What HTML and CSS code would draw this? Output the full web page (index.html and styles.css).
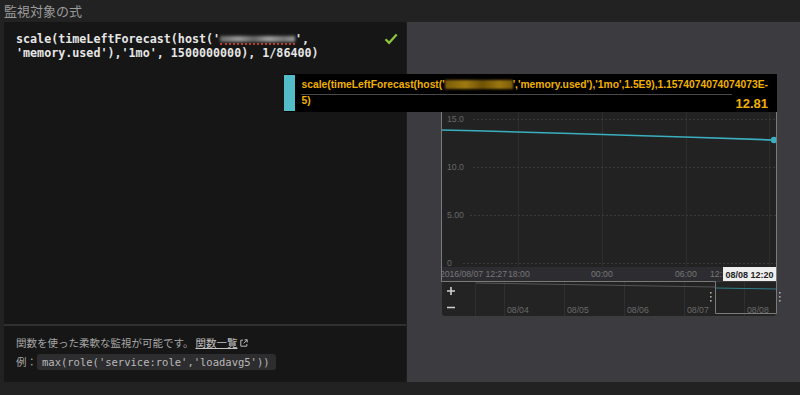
FILE: index.html
```html
<!DOCTYPE html>
<html lang="ja">
<head>
    <meta charset="UTF-8">
    <meta name="viewport" content="width=device-width, initial-scale=1.0">
    <title>監視対象の式</title>
    <link rel="stylesheet" href="styles.css">
</head>
<body>
    <h2 class="title">監視対象の式</h2>
    <div class="main">
        <div class="editor-pane">
            <div class="editor">
                <pre class="expr">scale(timeLeftForecast(host('<span class="masked"></span>',
'memory.used'),'1mo', 1500000000), 1/86400)</pre>
                <svg class="check" width="14" height="12" viewBox="0 0 14 12">
                    <path d="M1.5 6.2l3.6 3.6 7.6-8.4" stroke="#8cc63e" stroke-width="2.2" fill="none"/>
                </svg>
            </div>
            <div class="help">
                <p>関数を使った柔軟な監視が可能です。<a class="doc-link" href="#">関数一覧</a><svg class="ext" width="8" height="8" viewBox="0 0 8 8"><path d="M3 1.2H0.8v6h6V5" stroke="#bbb" fill="none"/><path d="M4.5 0.8h2.7v2.7M7.2 0.8L3.6 4.4" stroke="#bbb" fill="none"/></svg></p>
                <p>例：<code>max(role('service:role','loadavg5'))</code></p>
            </div>
        </div>

        <div class="preview">
            <svg class="chart" width="340" height="213" viewBox="441 105 340 213">
                <!-- plot -->
                <rect x="441" y="105" width="335" height="176" fill="#222"/>
                <rect x="441" y="267" width="335" height="14" fill="#2d2d31"/>
                <g stroke="#2e2e2e">
                    <line x1="518.5" y1="105" x2="518.5" y2="267"/>
                    <line x1="602.5" y1="105" x2="602.5" y2="267"/>
                    <line x1="686.5" y1="105" x2="686.5" y2="267"/>
                    <line x1="769.5" y1="105" x2="769.5" y2="267"/>
                </g>
                <g stroke="#3a3a3a" stroke-dasharray="2 2">
                    <line x1="473" y1="119.5" x2="776" y2="119.5"/>
                    <line x1="473" y1="167.5" x2="776" y2="167.5"/>
                    <line x1="470" y1="215.5" x2="776" y2="215.5"/>
                    <line x1="463" y1="263.5" x2="776" y2="263.5"/>
                </g>
                <g class="axis" fill="#676767">
                    <text x="447" y="122">15.0</text>
                    <text x="447" y="170">10.0</text>
                    <text x="447" y="218">5.00</text>
                    <text x="447" y="266">0</text>
                </g>
                <path d="M441 130 Q602 134 774 140" stroke="#3aafc0" stroke-width="1.6" fill="none"/>
                <circle cx="774" cy="140" r="3.2" fill="#3aafc0"/>
                <g class="axis" fill="#777">
                    <text x="440" y="276.5" textLength="67">2016/08/07 12:27</text>
                    <text x="508" y="276.5">18:00</text>
                    <text x="591" y="276.5">00:00</text>
                    <text x="675" y="276.5">06:00</text>
                    <text x="710" y="276.5">12:</text>
                </g>
                <rect x="723" y="267" width="53" height="14" fill="#eee"/>
                <text class="axis-current" x="749.5" y="277.5" text-anchor="middle">08/08 12:20</text>

                <!-- navigator -->
                <path d="M442 282H776V313Q776 316 773 316H445Q442 316 442 313Z" fill="#232323"/>
                <g stroke="#2f2f2f">
                    <line x1="475.5" y1="282" x2="475.5" y2="316"/>
                    <line x1="504.5" y1="282" x2="504.5" y2="316"/>
                    <line x1="564.5" y1="282" x2="564.5" y2="316"/>
                    <line x1="624.5" y1="282" x2="624.5" y2="316"/>
                    <line x1="684.5" y1="282" x2="684.5" y2="316"/>
                    <line x1="744.5" y1="282" x2="744.5" y2="316"/>
                </g>
                <path d="M447 291H455M451 287V295M447 307.5H455" stroke="#d0d0d0" stroke-width="1.6"/>
                <path d="M476 283L715 287" stroke="#555" fill="none"/>
                <path d="M715 288L776 289" stroke="#2f7f8a" fill="none"/>
                <g class="axis" fill="#6a6a6a">
                    <text x="507" y="313">08/04</text>
                    <text x="567" y="313">08/05</text>
                    <text x="627" y="313">08/06</text>
                    <text x="687" y="313">08/07</text>
                    <text x="747" y="313">08/08</text>
                </g>
                <path d="M441.5 105V281.5H715.5V313.5H776.5V105" stroke="#7a7a7a" fill="none"/>
                <g fill="#aaa">
                    <rect x="710" y="292" width="1.6" height="1.6"/>
                    <rect x="710" y="296" width="1.6" height="1.6"/>
                    <rect x="710" y="300" width="1.6" height="1.6"/>
                    <rect x="779" y="292" width="1.6" height="1.6"/>
                    <rect x="779" y="296" width="1.6" height="1.6"/>
                    <rect x="779" y="300" width="1.6" height="1.6"/>
                </g>
            </svg>
        </div>

        <div class="tooltip">
            <div class="tip-swatch"></div>
            <div class="tip-body">
                <div class="tip-name">scale(timeLeftForecast(host('<span class="tip-masked"></span>','memory.used'),'1mo',1.5E9),1.1574074074074073E-</div>
                <div class="tip-rule"></div>
                <div class="tip-row"><span>5)</span><span class="tip-value">12.81</span></div>
            </div>
        </div>
    </div>
</body>
</html>
```

FILE: styles.css
```css
* {
    box-sizing: border-box;
}
body {
    margin: 0;
    height: 395px;
    overflow: hidden;
    background-color: #222;
    font-family: "Liberation Sans", "Noto Sans CJK JP", sans-serif;
}
.title {
    margin: 0;
    padding: 0 4px;
    height: 22px;
    line-height: 23px;
    font-size: 13px;
    font-weight: normal;
    color: #9b9b9b;
}
.main {
    position: relative;
    display: flex;
    height: 360px;
    margin-left: 4px;
}
.editor-pane {
    width: 403px;
    display: flex;
    flex-direction: column;
    background-color: #161616;
    border-right: 1px solid #1d1d1d;
}
.editor {
    flex: 1;
    position: relative;
    padding: 10px 12px;
}
.expr {
    margin: 0;
    font-family: "DejaVu Sans Mono", monospace;
    font-size: 11.7px;
    line-height: 14px;
    font-weight: bold;
    color: #e6e6e6;
    white-space: pre;
}
.masked {
    display: inline-block;
    position: relative;
    width: 75px;
    height: 11px;
    vertical-align: -2px;
    border-bottom: 2px dotted #c0392b;
}
.masked::before {
    content: "";
    position: absolute;
    top: 2px;
    left: 0;
    right: 0;
    bottom: 1px;
    background: linear-gradient(90deg, #6a6a6a, #9a9a9a 25%, #666 45%, #a0a0a0 65%, #777 85%, #999);
    filter: blur(1.5px);
}
.check {
    position: absolute;
    top: 11px;
    right: 8px;
}
.help {
    height: 58px;
    padding: 8px 12px 0;
    border-top: 2px solid #303030;
}
.help p {
    margin: 0;
    font-size: 10.5px;
    line-height: 19px;
    color: #a6a6a6;
}
.doc-link {
    margin-left: 2px;
    color: #c4c4c4;
}
.ext {
    margin-left: 3px;
    vertical-align: 0;
}
code {
    font-family: "DejaVu Sans Mono", monospace;
    font-size: 10.5px;
    padding: 2px 6px 2px 5px;
    border-radius: 3px;
    background-color: #2d2d2f;
    color: #b9b9b9;
}
.preview {
    flex: 1;
    padding: 83px 0 0 34px;
    background-color: #3b3b40;
}
.chart {
    display: block;
}
.axis {
    font-family: "Liberation Sans", sans-serif;
    font-size: 8.7px;
}
.axis-current {
    font-family: "Liberation Sans", sans-serif;
    font-size: 9px;
    font-weight: bold;
    fill: #222;
}
.tooltip {
    position: absolute;
    left: 280px;
    top: 52px;
    width: 493px;
    height: 38px;
    display: flex;
    background-color: #000;
}
.tip-swatch {
    width: 12px;
    margin: 1px 0;
    background-color: #52bcc9;
}
.tip-body {
    flex: 1;
    padding: 4px 9px 0 6px;
    color: #f0b000;
    font-size: 10.3px;
    font-weight: bold;
}
.tip-name {
    line-height: 13px;
    white-space: nowrap;
}
.tip-masked {
    display: inline-block;
    width: 68px;
    height: 9px;
    vertical-align: -1px;
    background: linear-gradient(90deg, #7a5c08, #a07a10 30%, #6e5207 55%, #9c7610 80%, #7a5c08);
    filter: blur(1.2px);
}
.tip-rule {
    width: 431px;
    height: 1px;
    margin-top: 3px;
    background-color: #4a4a4a;
}
.tip-row {
    display: flex;
    justify-content: space-between;
    align-items: flex-start;
    line-height: 11px;
}
.tip-value {
    margin-top: 1px;
    font-size: 13px;
    line-height: 15px;
}
```
